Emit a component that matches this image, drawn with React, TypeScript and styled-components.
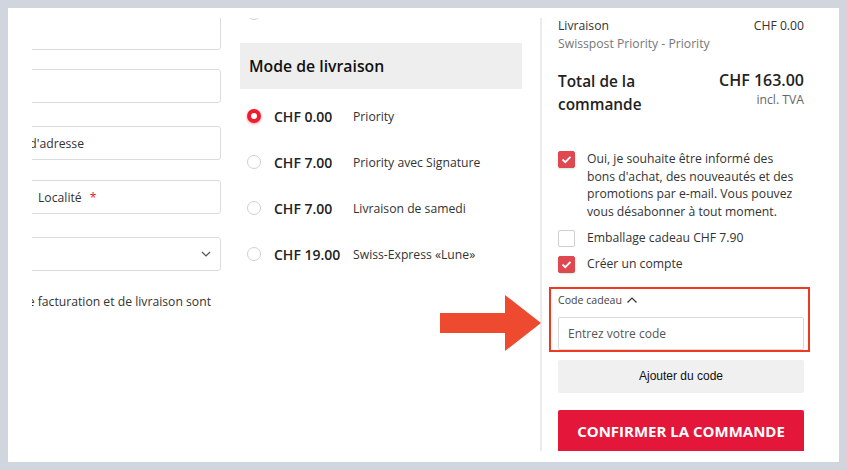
import React from "react";
import styled, { createGlobalStyle, css } from "styled-components";

const GlobalStyle = createGlobalStyle`
  * { box-sizing: border-box; }
  html, body { margin: 0; padding: 0; }
  body {
    background: #d1d5de;
    font-family: "Open Sans", "Noto Sans", sans-serif;
    color: #333;
  }
`;

const Page = styled.div`
  width: 847px;
  height: 470px;
  padding: 8px;
`;

// white sheet holding the screenshot of the checkout
const Sheet = styled.div`
  position: relative;
  width: 831px;
  height: 454px;
  background: #fff;
  padding: 10px 0 0 24px;
`;

const Viewport = styled.div`
  width: 807px;
  height: 433px;
  overflow: hidden;
  display: grid;
  grid-template-columns: 189px 282px 264px;
  column-gap: 19px;
`;

/* ---------- left column (address form, scrolled off to the left) ---------- */

const LeftColumn = styled.div`
  margin-left: -160px;
  width: 349px;
  display: flex;
  flex-direction: column;
`;

const Field = styled.div<{ $mt: number; $end?: boolean }>`
  margin-top: ${(p) => p.$mt}px;
  height: 34px;
  border: 1px solid #dcdcdc;
  border-radius: 3px;
  display: flex;
  align-items: center;
  font-size: 12.2px;
  color: #333;
  padding: 0 10px;
  white-space: nowrap;
  ${(p) =>
    p.$end &&
    css`
      justify-content: flex-end;
      padding-right: 136px;
    `}
`;

const FieldRow = styled.div`
  margin-top: 20px;
  display: flex;
  gap: 10px;
  & > * {
    margin-top: 0;
  }
  & > :first-child {
    flex: 1;
  }
  & > :last-child {
    width: 194px;
  }
`;

const Required = styled.span`
  color: #e8112d;
  margin-left: 8px;
`;

const Select = styled(Field)`
  justify-content: flex-end;
  padding-right: 9px;
`;

const Note = styled.div`
  margin-top: 22px;
  display: flex;
  justify-content: flex-end;
  padding-right: 10px;
  font-size: 12.2px;
  line-height: 18px;
  white-space: nowrap;
  color: #333;
`;

/* ---------- middle column (delivery mode) ---------- */

const MiddleColumn = styled.div`
  display: flex;
  flex-direction: column;
`;

const Radio = styled.span<{ $checked?: boolean }>`
  flex: none;
  width: 14px;
  height: 14px;
  border-radius: 50%;
  border: 1px solid #d0d0d0;
  background: #fff;
  ${(p) =>
    p.$checked &&
    css`
      border: 4px solid #ee1d2f;
      box-shadow: 0 1px 3px rgba(238, 29, 47, 0.45);
    `}
`;

const PrevRow = styled.div`
  margin-top: -12px;
  padding-left: 7px;
  display: flex;
`;

const SectionHeader = styled.h2`
  margin: 23px 0 0;
  height: 46px;
  background: #eeeeee;
  display: flex;
  align-items: center;
  padding-left: 9px;
  font-size: 15.8px;
  font-weight: 600;
  color: #111;
`;

const ShippingList = styled.div`
  margin-top: 4px;
  display: flex;
  flex-direction: column;
`;

const ShippingRow = styled.label`
  height: 46px;
  display: flex;
  align-items: center;
  padding-left: 7px;
  gap: 13px;
`;

const Price = styled.span`
  width: 66px;
  font-size: 14px;
  font-weight: 600;
  color: #222;
  white-space: nowrap;
`;

const ShippingName = styled.span`
  font-size: 12.2px;
  color: #333;
`;

/* ---------- right column (summary) ---------- */

const Summary = styled.div`
  margin-left: -1px;
  border-left: 2px solid #ebebeb;
  padding-left: 16px;
  width: 264px;
  display: flex;
  flex-direction: column;
`;

const SummaryInner = styled.div`
  width: 246px;
  display: flex;
  flex-direction: column;
`;

const Line = styled.div`
  margin-top: -1px;
  display: flex;
  justify-content: space-between;
  font-size: 12.2px;
  line-height: 18px;
  color: #333;
`;

const Muted = styled.div`
  font-size: 12.2px;
  line-height: 18px;
  color: #777;
`;

const TotalRow = styled.div`
  margin-top: 17px;
  display: flex;
  justify-content: space-between;
`;

const TotalLabel = styled.div`
  font-size: 15.4px;
  font-weight: 600;
  line-height: 23px;
  color: #222;
`;

const TotalAmount = styled.div`
  text-align: right;
  font-size: 16px;
  font-weight: 600;
  line-height: 21px;
  color: #222;

  & small {
    display: block;
    font-size: 12.2px;
    font-weight: 400;
    line-height: 18px;
    color: #666;
  }
`;

const Options = styled.div`
  margin-top: 34px;
  display: flex;
  flex-direction: column;
  gap: 8px;
`;

const CheckRow = styled.label`
  display: flex;
  gap: 12px;
  font-size: 12.2px;
  line-height: 17.7px;
  color: #333;
`;

const Box = styled.span<{ $checked?: boolean }>`
  flex: none;
  width: 17px;
  height: 17px;
  margin-top: 1px;
  border-radius: 2px;
  display: flex;
  align-items: center;
  justify-content: center;
  border: 1px solid #cfcfcf;
  background: #fff;
  ${(p) =>
    p.$checked &&
    css`
      border-color: #df4751;
      background: #df4751;
      box-shadow: 0 1px 2px rgba(60, 160, 90, 0.25);
    `}
`;

// red annotation frame drawn around the gift code block
const Highlight = styled.div`
  margin: 14px -6px 0 -9px;
  border: 2px solid #ee3a25;
  padding: 3px 4px 0 7px;
`;

const Toggle = styled.div`
  display: flex;
  align-items: center;
  gap: 4px;
  font-size: 10.6px;
  line-height: 16px;
  color: #444;
`;

const CodeInput = styled.div`
  margin-top: 9px;
  height: 33px;
  border: 1px solid #dadada;
  border-radius: 2px;
  display: flex;
  align-items: center;
  padding-left: 9px;
  font-size: 12px;
  color: #555;
`;

const GreyButton = styled.button`
  margin-top: 8px;
  height: 33px;
  border: none;
  border-radius: 2px;
  background: #f0f0f0;
  font-family: "Liberation Sans", Arial, sans-serif;
  font-size: 12px;
  color: #111;
`;

const ConfirmButton = styled.button`
  margin-top: 17px;
  height: 46px;
  border: none;
  border-radius: 2px;
  background: #e4163a;
  color: #fff;
  font-family: "Open Sans", sans-serif;
  font-size: 15px;
  font-weight: 700;
  padding: 0 0 3px;
`;

const Arrow = styled.svg`
  position: absolute;
  left: 432px;
  top: 287px;
`;

const Check = () => (
  <svg width="11" height="9" viewBox="0 0 11 9">
    <path d="M1.5 4.5 L4.3 7.2 L9.5 1.8" fill="none" stroke="#fff" strokeWidth="1.8" />
  </svg>
);

const shipping = [
  { price: "CHF 0.00", name: "Priority", checked: true },
  { price: "CHF 7.00", name: "Priority avec Signature" },
  { price: "CHF 7.00", name: "Livraison de samedi" },
  { price: "CHF 19.00", name: "Swiss-Express «Lune»" },
];

export default function App() {
  return (
    <Page>
      <GlobalStyle />
      <Sheet>
        <Viewport>
          <LeftColumn>
            <Field $mt={-2} />
            <Field $mt={19} />
            <Field $mt={23} $end>
              Complément d'adresse
            </Field>
            <FieldRow>
              <Field $mt={0}>NPA</Field>
              <Field $mt={0}>
                Localité<Required>*</Required>
              </Field>
            </FieldRow>
            <Select $mt={23}>
              <svg width="10" height="6" viewBox="0 0 10 6">
                <path d="M1 1 L5 5 L9 1" fill="none" stroke="#555" strokeWidth="1.2" />
              </svg>
            </Select>
            <Note>Les adresses de facturation et de livraison sont</Note>
          </LeftColumn>

          <MiddleColumn>
            <PrevRow>
              <Radio />
            </PrevRow>
            <SectionHeader>Mode de livraison</SectionHeader>
            <ShippingList>
              {shipping.map((s) => (
                <ShippingRow key={s.name}>
                  <Radio $checked={s.checked} />
                  <Price>{s.price}</Price>
                  <ShippingName>{s.name}</ShippingName>
                </ShippingRow>
              ))}
            </ShippingList>
          </MiddleColumn>

          <Summary>
            <SummaryInner>
              <Line>
                <span>Livraison</span>
                <span>CHF 0.00</span>
              </Line>
              <Muted>Swisspost Priority - Priority</Muted>
              <TotalRow>
                <TotalLabel>
                  Total de la
                  <br />
                  commande
                </TotalLabel>
                <TotalAmount>
                  CHF 163.00
                  <small>incl. TVA</small>
                </TotalAmount>
              </TotalRow>

              <Options>
                <CheckRow>
                  <Box $checked>
                    <Check />
                  </Box>
                  <span>
                    Oui, je souhaite être informé des bons d'achat, des nouveautés et des
                    promotions par e-mail. Vous pouvez vous désabonner à tout moment.
                  </span>
                </CheckRow>
                <CheckRow>
                  <Box />
                  <span>Emballage cadeau CHF 7.90</span>
                </CheckRow>
                <CheckRow>
                  <Box $checked>
                    <Check />
                  </Box>
                  <span>Créer un compte</span>
                </CheckRow>
              </Options>

              <Highlight>
                <Toggle>
                  Code cadeau
                  <svg width="12" height="8" viewBox="0 0 12 8">
                    <path d="M1.5 6.5 L6 2 L10.5 6.5" fill="none" stroke="#333" strokeWidth="1.2" />
                  </svg>
                </Toggle>
                <CodeInput>Entrez votre code</CodeInput>
              </Highlight>
              <GreyButton>Ajouter du code</GreyButton>
              <ConfirmButton>CONFIRMER LA COMMANDE</ConfirmButton>
            </SummaryInner>
          </Summary>
        </Viewport>

        <Arrow width="101" height="57" viewBox="0 0 101 57">
          <path d="M0 18 H65 V0 L101 28 L65 56 V38 H0 Z" fill="#ee4a2f" />
        </Arrow>
      </Sheet>
    </Page>
  );
}
